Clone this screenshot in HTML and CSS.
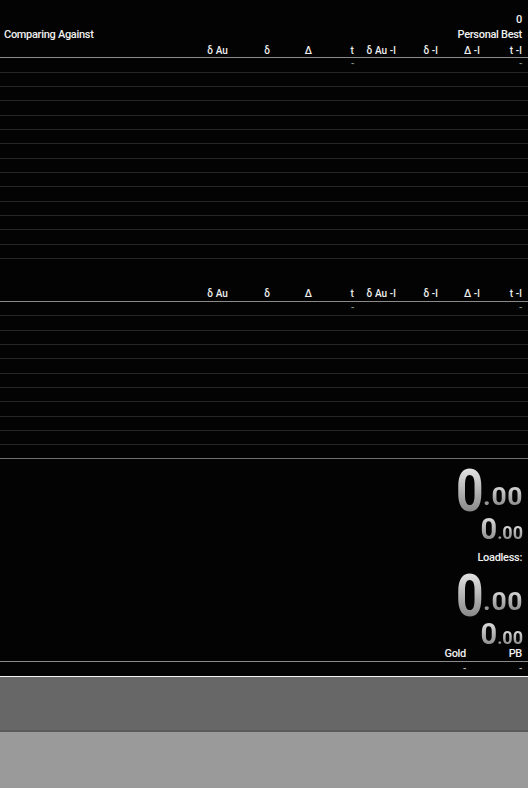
FILE: index.html
```html
<!DOCTYPE html>
<html>
<head>
<meta charset="utf-8">
<title>Splits</title>
<link rel="stylesheet" href="styles.css">
</head>
<body>
<div class="app">
  <section class="splits">
    <div class="title-row end"><span>0</span></div>
    <div class="title-row"><span>Comparing Against</span><span>Personal Best</span></div>
    <div class="cols header">
      <span></span><span>δ Au</span><span>δ</span><span>Δ</span><span>t</span><span>δ Au -l</span><span>δ -l</span><span>Δ -l</span><span>t -l</span>
    </div>
    <div class="cols row"><span></span><span></span><span></span><span></span><span>-</span><span></span><span></span><span></span><span>-</span></div>
    <div class="cols row"></div>
    <div class="cols row"></div>
    <div class="cols row"></div>
    <div class="cols row"></div>
    <div class="cols row"></div>
    <div class="cols row"></div>
    <div class="cols row"></div>
    <div class="cols row"></div>
    <div class="cols row"></div>
    <div class="cols row"></div>
    <div class="cols row"></div>
    <div class="cols row"></div>
    <div class="cols row"></div>
  </section>
  <div class="spacer"></div>
  <section class="splits">
    <div class="cols header">
      <span></span><span>δ Au</span><span>δ</span><span>Δ</span><span>t</span><span>δ Au -l</span><span>δ -l</span><span>Δ -l</span><span>t -l</span>
    </div>
    <div class="cols row"><span></span><span></span><span></span><span></span><span>-</span><span></span><span></span><span></span><span>-</span></div>
    <div class="cols row"></div>
    <div class="cols row"></div>
    <div class="cols row"></div>
    <div class="cols row"></div>
    <div class="cols row"></div>
    <div class="cols row"></div>
    <div class="cols row"></div>
    <div class="cols row"></div>
    <div class="cols row"></div>
    <div class="cols row last"></div>
  </section>
  <section class="timer">
    <div class="t-main first"><span class="grad t-int">0</span><span class="grad t-dec">.00</span></div>
    <div class="t-sub"><span class="grad">0</span><span class="grad t-dec">.00</span></div>
    <div class="t-label">Loadless:</div>
    <div class="t-main second"><span class="grad t-int">0</span><span class="grad t-dec">.00</span></div>
    <div class="t-sub"><span class="grad">0</span><span class="grad t-dec">.00</span></div>
  </section>
  <section class="prev">
    <div class="prev-row labels"><span>Gold</span><span>PB</span></div>
    <div class="prev-row values"><span>-</span><span>-</span></div>
  </section>
  <div class="panel-dark"></div>
  <div class="panel-light"></div>
</div>
</body>
</html>
```

FILE: styles.css
```css
* {
  box-sizing: border-box;
  margin: 0;
  padding: 0;
}

html,
body {
  background: #000;
}

body {
  width: 528px;
  height: 788px;
  overflow: hidden;
  font-family: Roboto, "Liberation Sans", sans-serif;
  font-size: 11px;
  font-weight: 500;
  letter-spacing: -0.3px;
  color: #f0f0f0;
}

.app {
  display: flex;
  flex-direction: column;
  height: 788px;
  background: #030303;
}

.splits:first-child {
  padding-top: 12px;
}

.title-row {
  display: flex;
  justify-content: space-between;
  height: 15px;
  line-height: 15px;
  padding: 0 6px 0 4px;
}

.title-row.end {
  justify-content: flex-end;
}

.cols {
  display: grid;
  grid-template-columns: 1fr repeat(8, 42px);
  padding-right: 6px;
  text-align: right;
  white-space: nowrap;
}

.header {
  height: 16.4px;
  padding-top: 1px;
  line-height: 15px;
  font-size: 10px;
  letter-spacing: 0.1px;
  border-bottom: 1px solid #8a8a8a;
}

.row {
  height: 14.333px;
  line-height: 11px;
  font-size: 10px;
  color: #8a8a8a;
  border-bottom: 1px solid #262626;
}

.row.last {
  border-bottom-color: #707070;
}

.spacer {
  height: 26.5px;
  flex: none;
}

.timer {
  display: flex;
  flex-direction: column;
  align-items: flex-end;
  padding-right: 5px;
  font-family: Roboto, "Liberation Sans", sans-serif;
  font-weight: 700;
  letter-spacing: 0;
}

.t-main {
  font-size: 60px;
  line-height: 56px;
  white-space: nowrap;
}

.t-main.first {
  padding-top: 4px;
  height: 60px;
}

.t-main.second {
  padding-top: 3px;
  height: 59px;
}

.t-int {
  display: inline-block;
  transform: scaleX(0.8);
  transform-origin: right center;
  background: linear-gradient(#e6e6e6, #7e7e7e);
}

.t-main .t-dec {
  font-size: 26.5px;
  line-height: 20px;
  vertical-align: 6px;
  letter-spacing: 0.6px;
}

.t-sub {
  height: 20px;
  font-size: 29px;
  line-height: 20px;
  white-space: nowrap;
}

.t-sub .t-dec {
  font-size: 18px;
  line-height: 16px;
}

.grad {
  background: linear-gradient(#efefef, #787878);
  -webkit-background-clip: text;
  background-clip: text;
  color: transparent;
}

.t-label {
  margin-top: 11px;
  height: 15px;
  line-height: 15px;
  font-size: 11px;
  font-weight: 500;
  letter-spacing: -0.3px;
  color: #f0f0f0;
  padding-right: 1px;
}

.prev {
  margin-top: 2px;
}

.prev-row {
  display: grid;
  grid-template-columns: 1fr 56px 56px;
  padding-right: 6px;
  text-align: right;
}

.prev-row::before {
  content: "";
}

.prev-row.labels {
  height: 16px;
  line-height: 15px;
  border-bottom: 1px solid #8a8a8a;
}

.prev-row.values {
  height: 15px;
  line-height: 13px;
  font-size: 10px;
  color: #bbb;
  border-bottom: 1px solid #f4f4f4;
}

.panel-dark {
  height: 55px;
  flex: none;
  background: linear-gradient(#676767 0, #676767 53px, #5a5a5a 53px, #5a5a5a 55px);
}

.panel-light {
  flex: 1;
  background: #9a9a9a;
}
```
